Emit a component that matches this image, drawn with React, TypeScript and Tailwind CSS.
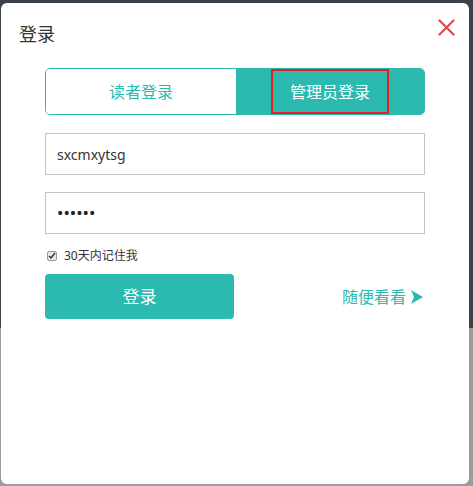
import React from "react";

export default function App() {
  return (
    <div
      className="w-[473px] h-[486px] overflow-hidden bg-[linear-gradient(to_bottom,#3b4249_0px,#3b4249_328px,#9c9c9c_328px,#9c9c9c_100%)] pt-[3px] pl-[1px] font-['Noto_Sans','Noto_Sans_CJK_SC',sans-serif]"
    >
      <div className="w-[468px] h-[481px] bg-white rounded-[6px] flex flex-col">
        <div className="flex items-start justify-between pl-[18px] pr-[14px] pt-[19px] h-[65px]">
          <span className="text-[18px] leading-[24px] text-[#333]">登录</span>
          <svg width="17" height="17" viewBox="0 0 17 17" className="mt-[-3px]">
            <path d="M1.5 1.5 L15.5 15.5 M15.5 1.5 L1.5 15.5" stroke="#db4a4f" strokeWidth="2.2" strokeLinecap="round" />
          </svg>
        </div>
        <div className="pl-[44px] pr-[44px]">
          <div className="flex h-[47px] rounded-[5px] border border-[#2cb9b0] overflow-hidden">
            <div className="w-[190px] bg-white flex items-center justify-center text-[16px] text-[#2cb9b0]">
              读者登录
            </div>
            <div className="flex-1 bg-[#2cb9b0] flex items-center justify-center">
              <div className="w-[118px] h-[45px] border-2 border-[#e3201c] flex items-center justify-center text-[16px] text-white">
                管理员登录
              </div>
            </div>
          </div>
          <div className="mt-[18px] h-[42px] border border-[#c3c3c3] flex items-center pl-[11px] text-[14px] text-[#333]">
            sxcmxytsg
          </div>
          <div className="mt-[17px] h-[42px] border border-[#c3c3c3] flex items-center pl-[11px] text-[17px] text-[#222]">
            ••••••
          </div>
          <div className="mt-[15px] flex items-center h-[14px]">
            <div className="w-[10px] h-[10px] ml-[2px] border border-[#999] rounded-[2px] bg-[#e6e6e6] flex items-center justify-center">
              <svg width="8" height="8" viewBox="0 0 8 8">
                <path d="M1 4 L3 6 L7 1" stroke="#333" strokeWidth="1.5" fill="none" />
              </svg>
            </div>
            <span className="ml-[7px] text-[12px] text-[#333]">30天内记住我</span>
          </div>
          <div className="mt-[11px] flex items-center">
            <div className="w-[189px] h-[45px] rounded-[4px] bg-[#2cb9b0] flex items-center justify-center text-[17px] text-white">
              登录
            </div>
            <div className="ml-auto mr-[2px] flex items-center text-[16px] text-[#2cb9b0]">
              <span>随便看看</span>
              <svg width="12" height="14" viewBox="0 0 12 14" className="ml-[5px]">
                <polygon points="0,0 12,7 0,14 3,7" fill="#2cb9b0" />
              </svg>
            </div>
          </div>
        </div>
      </div>
    </div>
  );
}
